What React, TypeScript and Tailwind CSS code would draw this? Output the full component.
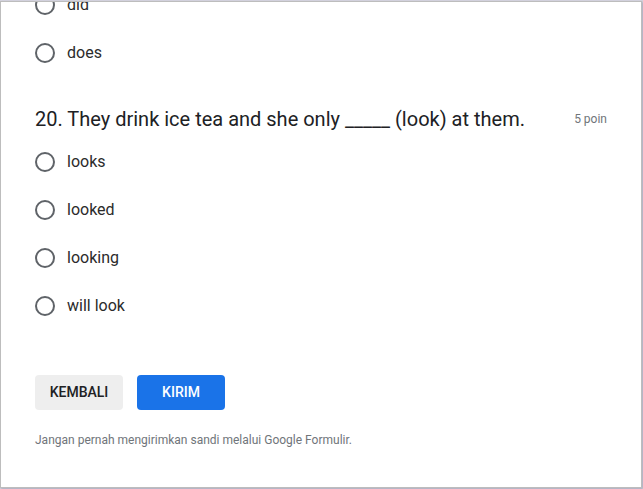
const options = ['looks', 'looked', 'looking', 'will look'];

const Radio = () => (
    <div className="w-5 h-5 rounded-full border-2 border-[#5f6368] shrink-0" />
);

const Option = ({ label }: { label: string }) => (
    <div className="flex items-center h-12">
        <Radio />
        <span className="ml-3 text-[16px] text-[#2b2b2b]">{label}</span>
    </div>
);

export default function App() {
    return (
        <div className="w-[643px] h-[489px] bg-[#d6d5e0] pt-px overflow-hidden" style={{ fontFamily: 'Roboto, "Liberation Sans", sans-serif' }}>
            <div className="w-[642px] h-[487px] bg-white border border-[#bdbdbd] shadow-[1px_1px_2px_rgba(120,120,150,0.5)] overflow-hidden">
                <div className="pl-[34px] pr-[34px]">
                    <div className="-mt-[21px]">
                        <Option label="did" />
                        <Option label="does" />
                    </div>

                    <div className="flex items-center justify-between mt-[30px] h-6">
                        <h2 className="text-[20px] text-[#202124] leading-6">
                            20. They drink ice tea and she only _____ (look) at them.
                        </h2>
                        <span className="text-[12px] text-[#70757a]">5 poin</span>
                    </div>

                    <div className="mt-[7px]">
                        {options.map((o) => (
                            <Option key={o} label={o} />
                        ))}
                    </div>

                    <div className="flex gap-3.5 mt-[45px]">
                        <button className="w-[88px] h-[35px] rounded bg-[#eeeeee] text-[14px] font-medium text-[#202124]">
                            KEMBALI
                        </button>
                        <button className="w-[88px] h-[35px] rounded bg-[#1a73e8] text-[14px] font-medium text-white">
                            KIRIM
                        </button>
                    </div>

                    <p className="mt-[21px] text-[12px] text-[#70757a]">
                        Jangan pernah mengirimkan sandi melalui Google Formulir.
                    </p>
                </div>
            </div>
        </div>
    );
}
